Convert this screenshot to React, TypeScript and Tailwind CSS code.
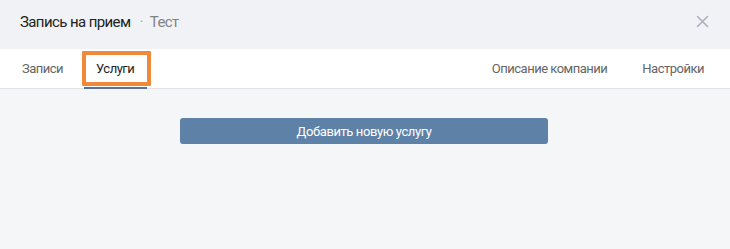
import React from 'react';

export default function App() {
  return (
    <div className="w-[730px] h-[249px] bg-[#f5f6f8] font-['Roboto',sans-serif] flex flex-col">
      <div className="h-[49px] bg-[#f0f2f5] flex items-start justify-between pl-[20px] pr-[21px] pt-[13px]">
        <div className="flex items-center text-[15px] tracking-[-0.6px] leading-[18px]">
          <span className="text-[#222]">Запись на прием</span>
          <span className="text-[#a5abb3] ml-[9px] mr-[7px]">·</span>
          <span className="text-[#828282]">Тест</span>
        </div>
        <svg width="13" height="13" viewBox="0 0 13 13" className="mt-[2px]">
          <path d="M1.5 1.5L11.5 11.5M11.5 1.5L1.5 11.5" stroke="#a8afba" strokeWidth="1.5" strokeLinecap="round" />
        </svg>
      </div>
      <div className="h-[40px] bg-white border-b border-[#e1e3e6] flex items-stretch justify-between pl-[22px] pr-[26px] text-[13px] tracking-[-0.5px]">
        <div className="flex">
          <div className="flex items-center text-[#656565]">Записи</div>
          <div className="relative flex items-center ml-[33px] text-[#222]">
            Услуги
            <div className="absolute left-[-14px] right-[-17px] top-[2px] bottom-[2px] border-[4px] border-[#f0893a] rounded-[1px]" />
            <div className="absolute left-[-12px] right-[-13px] bottom-[-1px] h-[2px] bg-[#5b7196]" />
          </div>
        </div>
        <div className="flex gap-[35px]">
          <div className="flex items-center text-[#656565]">Описание компании</div>
          <div className="flex items-center text-[#656565]">Настройки</div>
        </div>
      </div>
      <div className="flex justify-center pt-[29px]">
        <button className="w-[368px] h-[26px] bg-[#5e81a8] rounded-[3px] text-white text-[13px] tracking-[-0.4px] leading-none ml-[-2px]">
          Добавить новую услугу
        </button>
      </div>
    </div>
  );
}
